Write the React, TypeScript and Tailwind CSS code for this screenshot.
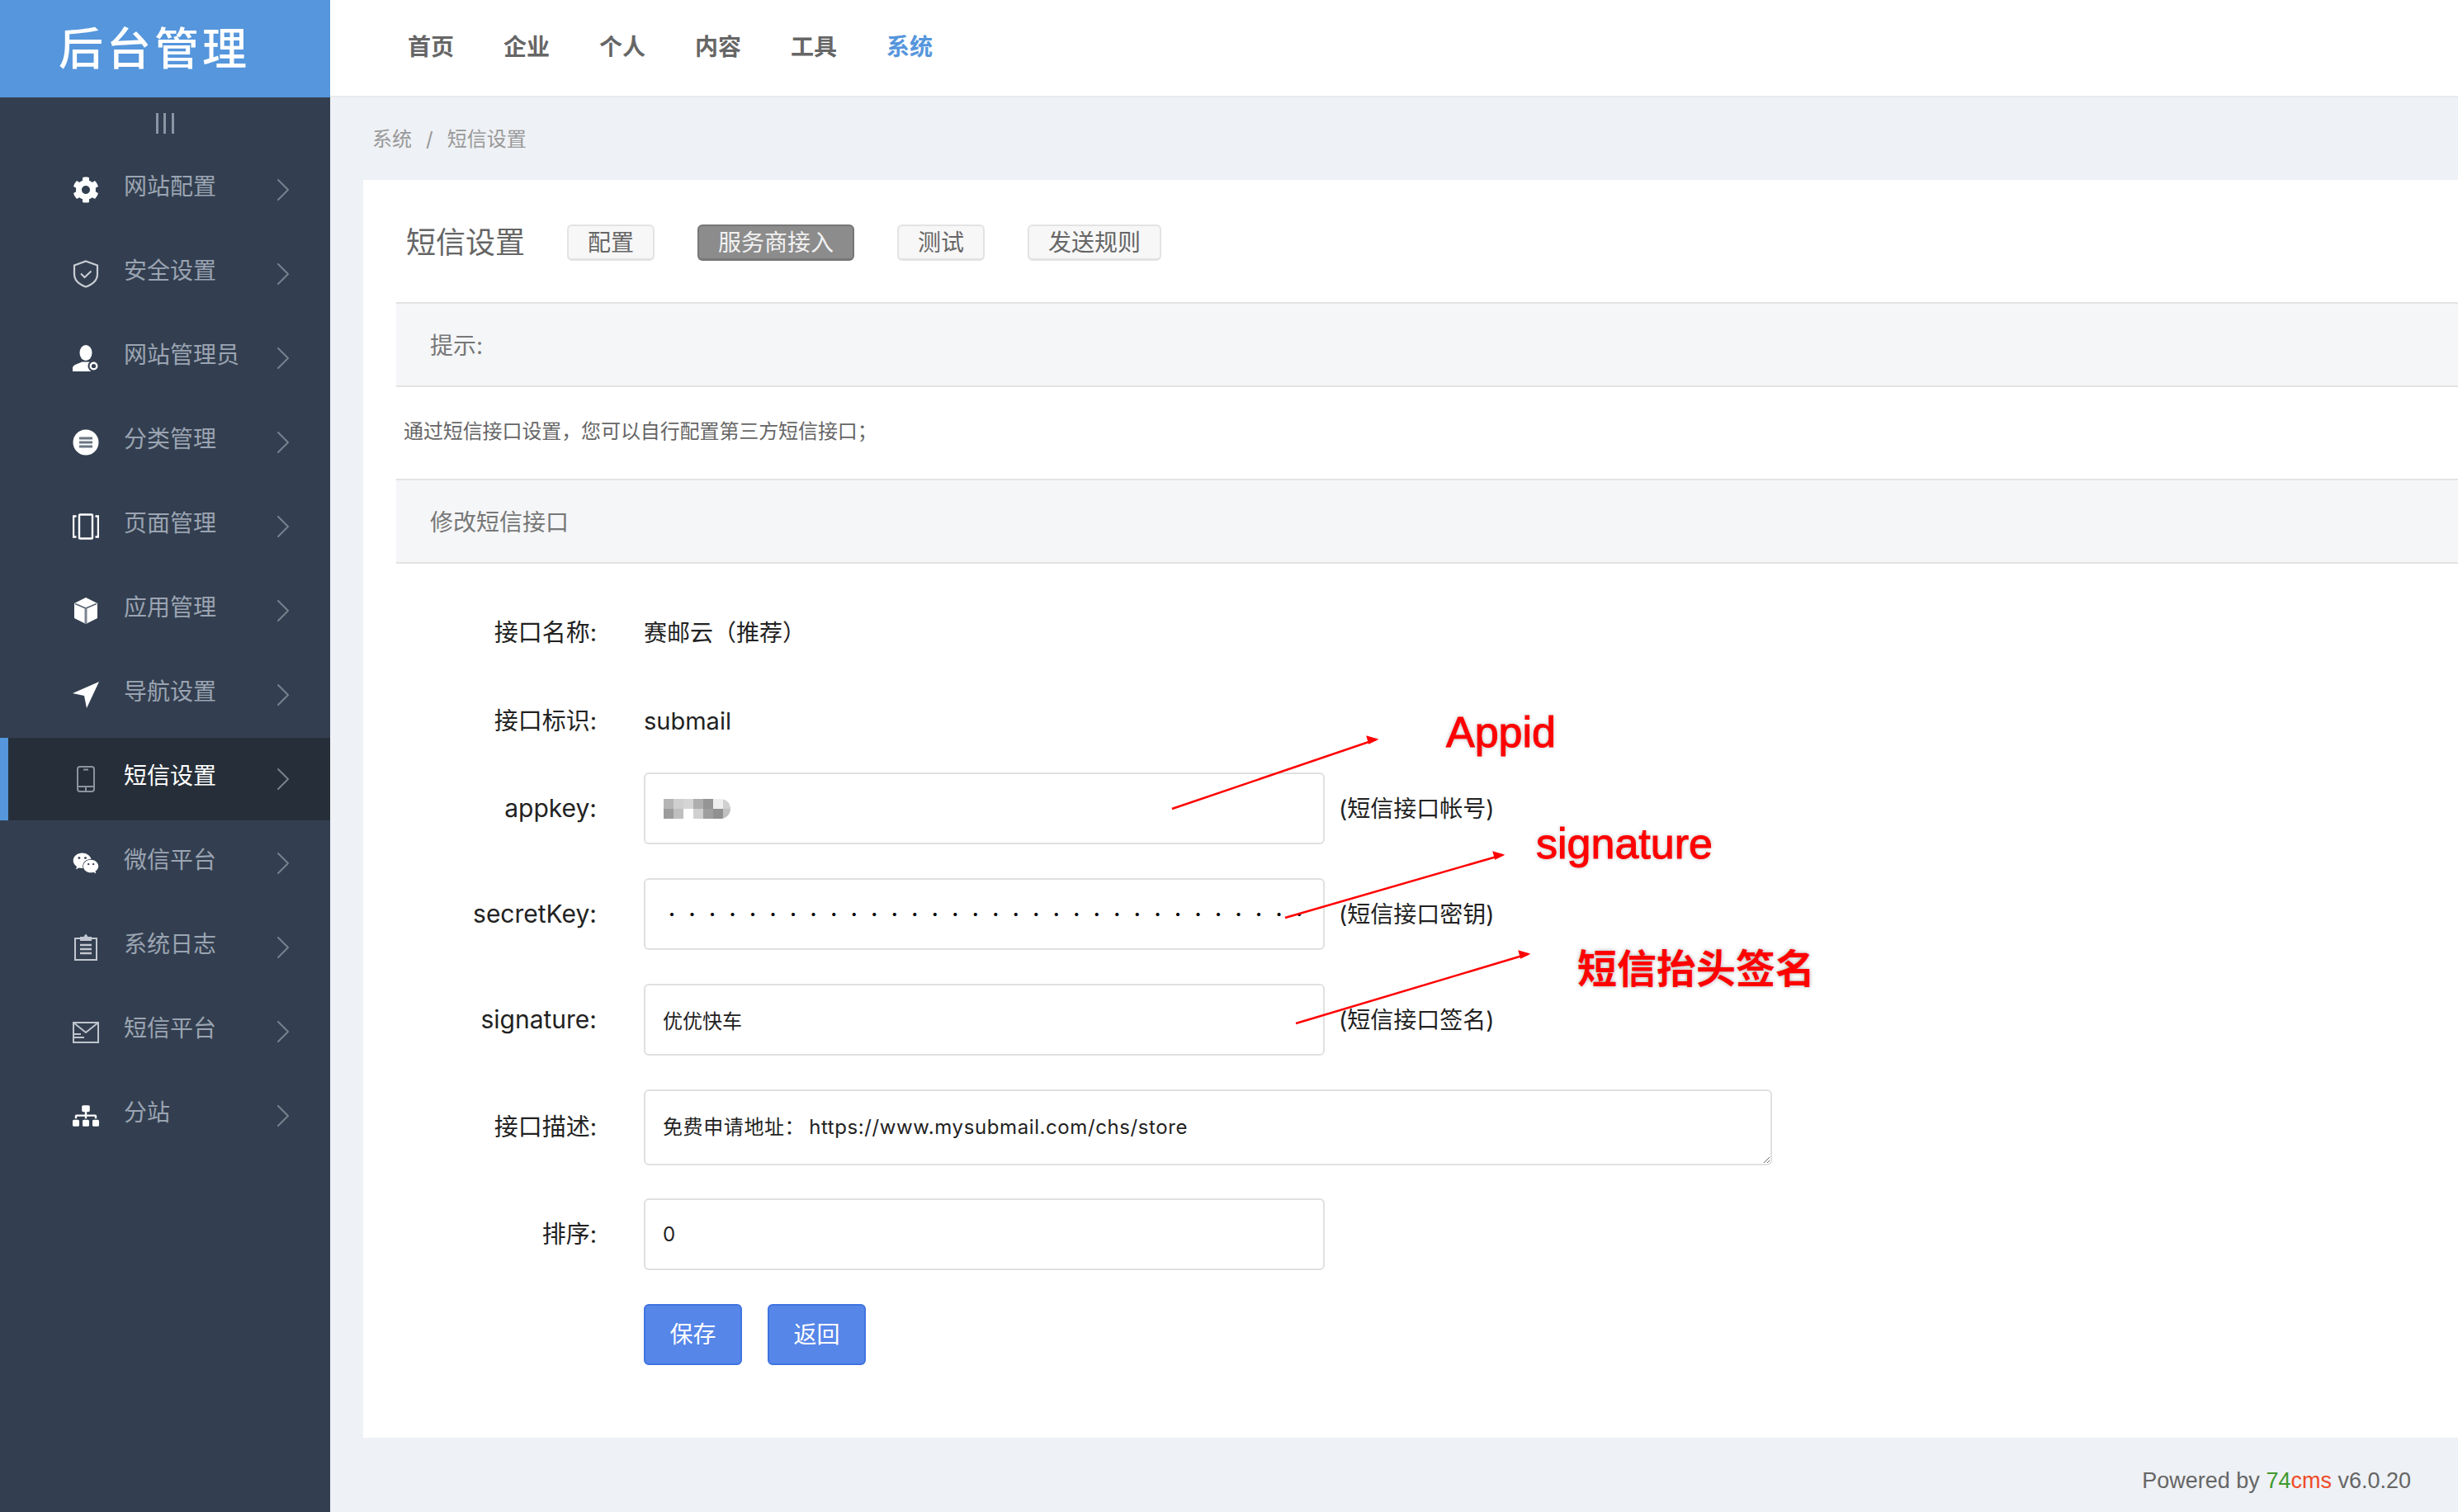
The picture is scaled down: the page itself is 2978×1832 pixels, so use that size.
import React from 'react';
import { ChevronRight } from 'lucide-react';
import { FaCog, FaWeixin, FaSitemap } from 'react-icons/fa';

const ShieldIcon = () => (
  <svg width="32" height="34" viewBox="0 0 32 34" fill="none" stroke="#c9cdd4" strokeWidth="2.2">
    <path d="M16 1.500L30 6.500V17C30 25 23 30 16 32.500C9 30 2 25 2 17V6.500Z" />
    <path d="M10 16.500l4.500 4.500 8-7.500" strokeWidth="2" />
  </svg>
);

const AdminIcon = () => (
  <svg width="32" height="32" viewBox="0 0 32 32">
    <ellipse cx="16" cy="9.500" rx="7.500" ry="9.500" fill="#fff" />
    <path d="M0 32v-4c0-4 6-5 11-7.500h10c2 1 3.500 1.500 5 2v9.500z" fill="#fff" />
    <circle cx="25.500" cy="25.500" r="7" fill="#333f50" />
    <circle cx="25.500" cy="25.500" r="3.800" fill="none" stroke="#fff" strokeWidth="2.400" />
  </svg>
);

const ListIcon = () => (
  <svg width="32" height="32" viewBox="0 0 32 32">
    <circle cx="16" cy="16" r="15.500" fill="#fff" />
    <path d="M8 9.500h16v3H8zM8 14.500h16v3H8zM8 19.500h16v3H8z" fill="#6b7683" />
  </svg>
);

const PagesIcon = () => (
  <svg width="32" height="32" viewBox="0 0 32 32" fill="none" stroke="#fff">
    <rect x="8" y="1.500" width="16" height="29" rx="1" strokeWidth="2.400" />
    <path d="M4.500 3.500H1v25h3.500M27.500 3.500H31v25h-3.500" strokeWidth="2.400" />
  </svg>
);

const CubeIcon = () => (
  <svg width="32" height="32" viewBox="0 0 32 32">
    <path d="M16 0L30 7V25L16 32L2 25V7Z" fill="#fff" />
    <path d="M3 7.500L16 13L29 7.500" fill="none" stroke="#5c6775" strokeWidth="1.800" />
    <path d="M16 13V32" stroke="#7a8491" strokeWidth="3" />
  </svg>
);

const ArrowIcon = () => (
  <svg width="32" height="32" viewBox="0 0 32 32">
    <path d="M32 0L0 14L14 17L17 32Z" fill="#fff" />
  </svg>
);

const PhoneIcon = () => (
  <svg width="32" height="32" viewBox="0 0 32 32" fill="none" stroke="#8b939e" strokeWidth="2">
    <rect x="6" y="1" width="20" height="30" rx="3" />
    <path d="M6 25h20M16 25v6M13 4.500h6" />
  </svg>
);

const ClipIcon = () => (
  <svg width="32" height="32" viewBox="0 0 32 32" fill="none" stroke="#c2c7cf" strokeWidth="2">
    <path d="M10 5H3v26h26V5h-7" />
    <path d="M10 7V4h4l2-3 2 3h4v3z" fill="#c2c7cf" />
    <path d="M9 13h14M9 18h14M9 23h14" strokeWidth="2.400" />
  </svg>
);

const MailIcon = () => (
  <svg width="32" height="32" viewBox="0 0 32 32" fill="none" stroke="#bfc4cc" strokeWidth="2">
    <path d="M1 5h30v24H1z" />
    <path d="M1 5l15 12L31 5M1 19h9M1 23h13" />
  </svg>
);

const menu: { label: string; icon: React.ReactNode; active?: boolean }[] = [
  { label: '网站配置', icon: <FaCog size={32} color="#fff" /> },
  { label: '安全设置', icon: <ShieldIcon /> },
  { label: '网站管理员', icon: <AdminIcon /> },
  { label: '分类管理', icon: <ListIcon /> },
  { label: '页面管理', icon: <PagesIcon /> },
  { label: '应用管理', icon: <CubeIcon /> },
  { label: '导航设置', icon: <ArrowIcon /> },
  { label: '短信设置', icon: <PhoneIcon />, active: true },
  { label: '微信平台', icon: <FaWeixin size={32} color="#fff" /> },
  { label: '系统日志', icon: <ClipIcon /> },
  { label: '短信平台', icon: <MailIcon /> },
  { label: '分站', icon: <FaSitemap size={32} color="#fff" /> },
];

const nav = ['首页', '企业', '个人', '内容', '工具', '系统'];

// pixelated mask over the appkey value
const mosaic = [
  '#b5b5b5', '#cfcfcf', '#d5d5d5', '#aeaeae', '#959595', '#eeeeee', '#d0d0d0',
  '#9c9c9c', '#bfbfbf', '#ffffff', '#d0d0d0', '#9e9e9e', '#909090', '#c0c0c0',
];

const Tab = ({ label, active }: { label: string; active?: boolean }) => (
  <span
    className={`flex h-[44px] items-center rounded-[6px] border-2 border-b-[3px] px-[23px] pt-[1px] text-[28px] ${
      active ? 'border-[#777] bg-[#8c8c8c] text-[#f2f2f2]' : 'border-[#e3e3e3] bg-[#f7f7f7] text-[#666]'
    }`}
  >
    {label}
  </span>
);

const Label = ({ children, latin }: { children: React.ReactNode; latin?: boolean }) => (
  <label className={`w-[243px] shrink-0 text-right text-[#222] ${latin ? 'text-[30px]' : 'text-[29px]'}`}>{children}</label>
);

const TextInput = ({ value, className }: { value: string; className?: string }) => (
  <input
    readOnly
    value={value}
    className={`h-[87px] w-[825px] rounded-[6px] border-2 border-[#e0e0e0] bg-white text-[24px] text-[#222] outline-none ${className ?? 'px-[21px]'}`}
  />
);

const Hint = ({ children }: { children: React.ReactNode }) => (
  <span className="-ml-[40px] text-[28px] text-[#222]">{children}</span>
);

const Section = ({ children }: { children: React.ReactNode }) => (
  <div className="ml-[40px] flex h-[103px] items-center border-y-2 border-[#e3e3e3] bg-[#f5f6f8] pl-[41px] pt-[2px] text-[28px] text-[#777]">
    {children}
  </div>
);

export default function App() {
  return (
    <div className="flex h-[1832px] w-[2978px] overflow-hidden bg-[#eef1f5] font-['Inter','Noto_Sans_CJK_SC',sans-serif]">
      {/* Sidebar */}
      <aside className="flex w-[400px] shrink-0 flex-col bg-[#333f50]">
        <div className="flex h-[118px] items-center bg-[#5596dc] pl-[71px] text-[54px] font-medium tracking-[4px] text-white">
          后台管理
        </div>
        <div className="flex h-[62px] justify-center pt-[19px]">
          <div className="mr-[1px] flex h-[25px] w-[22px] justify-between">
            <span className="w-[3px] bg-[#8b95a3]" />
            <span className="w-[3px] bg-[#8b95a3]" />
            <span className="w-[3px] bg-[#8b95a3]" />
          </div>
        </div>
        <div className="flex flex-col gap-[2px]">
          {menu.map((m) => (
            <div
              key={m.label}
              className={`flex h-[100px] items-center ${
                m.active ? 'border-l-[10px] border-[#5596dc] bg-[#262f39] pl-[78px]' : 'pl-[88px]'
              }`}
            >
              <span className="flex h-[32px] w-[32px] items-center justify-center">{m.icon}</span>
              <span className={`ml-[30px] w-[173px] -translate-y-[4px] text-[28px] ${m.active ? 'text-white' : 'text-[#9ba4b2]'}`}>
                {m.label}
              </span>
              <ChevronRight size={48} strokeWidth={1} color="#77818e" className="-ml-[4px]" />
            </div>
          ))}
        </div>
      </aside>

      {/* Right column */}
      <div className="flex min-w-0 flex-1 flex-col">
        <header className="flex h-[118px] items-center gap-[60px] border-b-2 border-[#e8ebee] bg-white pb-[2px] pl-[94px] text-[28px] font-bold text-[#666]">
          {nav.map((n) => (
            <span key={n} className={n === '系统' ? 'text-[#5596dc]' : ''}>
              {n}
            </span>
          ))}
        </header>

        <div className="flex h-[100px] items-center pl-[51px] pt-[2px] text-[24px] text-[#999]">
          <span>系统</span>
          <span className="mx-[17px]">/</span>
          <span>短信设置</span>
        </div>

        <main className="relative ml-[40px] h-[1524px] bg-white">
          <div className="flex items-center pl-[52px] pt-[54px]">
            <h1 className="mr-[51px] text-[36px] font-normal leading-[44px] text-[#666]">短信设置</h1>
            <div className="flex gap-[52px]">
              <Tab label="配置" />
              <Tab label="服务商接入" active />
              <Tab label="测试" />
              <Tab label="发送规则" />
            </div>
          </div>

          <div className="mt-[50px]">
            <Section>提示:</Section>
          </div>
          <div className="ml-[49px] flex h-[111px] items-center pb-[3px] text-[24px] tracking-[-0.1px] text-[#666]">
            通过短信接口设置，您可以自行配置第三方短信接口；
          </div>
          <Section>修改短信接口</Section>

          {/* Form */}
          <div className="ml-[40px] flex flex-col pt-[54px]">
            <div className="flex h-[60px] items-center gap-[57px]">
              <Label>接口名称:</Label>
              <span className="text-[28px] text-[#222] [text-spacing-trim:space-all]">赛邮云（推荐）</span>
            </div>
            <div className="mt-[47px] flex h-[60px] items-center gap-[57px]">
              <Label>接口标识:</Label>
              <span className="text-[29px] text-[#222]">submail</span>
            </div>
            <div className="mt-[32px] flex items-center gap-[57px]">
              <Label latin>appkey:</Label>
              <div className="relative">
                <TextInput value="" />
                <div className="absolute left-[24px] top-[32px] grid h-[24px] grid-cols-[repeat(6,12px)_9px] grid-rows-2 overflow-hidden rounded-r-full">
                  {mosaic.map((c, i) => (
                    <span key={i} style={{ backgroundColor: c }} />
                  ))}
                </div>
              </div>
              <Hint>(短信接口帐号)</Hint>
            </div>
            <div className="mt-[41px] flex items-center gap-[57px]">
              <Label latin>secretKey:</Label>
              <TextInput value={'·'.repeat(32)} className="pl-[28px] font-bold tracking-[16.500px] text-black" />
              <Hint>(短信接口密钥)</Hint>
            </div>
            <div className="mt-[41px] flex items-center gap-[57px]">
              <Label latin>signature:</Label>
              <TextInput value="优优快车" />
              <Hint>(短信接口签名)</Hint>
            </div>
            <div className="mt-[41px] flex items-center gap-[57px]">
              <Label>接口描述:</Label>
              <textarea
                readOnly
                value={'免费申请地址：\u2009https://www.mysubmail.com/chs/store'}
                className="h-[92px] w-[1367px] rounded-[6px] border-2 border-[#e0e0e0] px-[21px] pt-[29px] text-[24px] leading-[30px] tracking-[0.6px] text-[#222] outline-none"
              />
            </div>
            <div className="mt-[40px] flex items-center gap-[57px]">
              <Label>排序:</Label>
              <TextInput value="0" />
            </div>
            <div className="ml-[300px] mt-[41px] flex gap-[31px]">
              <button className="h-[74px] w-[119px] rounded-[6px] border-2 border-[#3f74e0] bg-[#5686e8] text-[28px] text-white">保存</button>
              <button className="h-[74px] w-[119px] rounded-[6px] border-2 border-[#3f74e0] bg-[#5686e8] text-[28px] text-white">返回</button>
            </div>
          </div>

          {/* Annotations drawn over the page */}
          <svg className="pointer-events-none absolute left-0 top-0" width="1600" height="1100" fill="none" stroke="#f00" strokeWidth="2.500">
            <path d="M980 762L1227 678M1117 894L1380 818M1130 1022L1411 938" />
            <path d="M1227 678l-10-3 2 7zM1380 818l-10-3 2 7zM1411 938l-10-3 2 7z" fill="#f00" />
          </svg>
          <span className="absolute left-[1312px] top-[630px] font-['Liberation_Sans',sans-serif] text-[52px] text-[#f00] [-webkit-text-stroke:1px_#f00] [text-shadow:0_0_5px_#aaa]">Appid</span>
          <span className="absolute left-[1421px] top-[765px] font-['Liberation_Sans',sans-serif] text-[52px] text-[#f00] [-webkit-text-stroke:1px_#f00] [text-shadow:0_0_5px_#aaa]">signature</span>
          <span className="absolute left-[1471px] top-[921px] font-['Liberation_Sans','Noto_Sans_CJK_SC',sans-serif] text-[48px] font-bold text-[#f00] [text-shadow:0_0_5px_#aaa]">短信抬头签名</span>
        </main>

        <footer className="flex flex-1 items-center justify-end pr-[57px] pt-[14px] font-['Liberation_Sans',sans-serif] text-[27px] text-[#666]">
          <span>
            Powered by <span className="text-[#3f9a2e]">74</span>
            <span className="text-[#ee4b28]">cms</span> v6.0.20
          </span>
        </footer>
      </div>
    </div>
  );
}
